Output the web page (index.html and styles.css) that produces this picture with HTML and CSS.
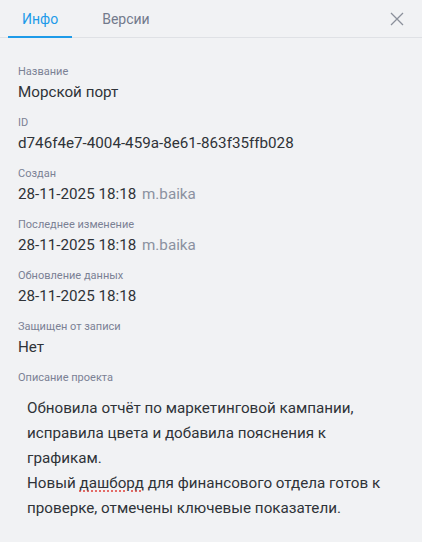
FILE: index.html
```html
<!DOCTYPE html>
<html lang="ru">
<head>
  <meta charset="UTF-8" />
  <title>Инфо</title>
  <link rel="stylesheet" href="styles.css">
</head>
<body>
  <header class="tabs-bar">
    <nav class="tabs">
      <a class="tab active" href="#">Инфо</a>
      <a class="tab" href="#">Версии</a>
    </nav>
    <button class="close" aria-label="Закрыть">
      <svg width="14" height="14" viewBox="0 0 14 14">
        <path d="M1 1 L13 13 M13 1 L1 13" stroke="#8b909b" stroke-width="1.3" fill="none"/>
      </svg>
    </button>
  </header>

  <main class="info">
    <div class="field">
      <div class="label">Название</div>
      <div class="value">Морской порт</div>
    </div>
    <div class="field">
      <div class="label">ID</div>
      <div class="value">d746f4e7-4004-459a-8e61-863f35ffb028</div>
    </div>
    <div class="field">
      <div class="label">Создан</div>
      <div class="value">28-11-2025 18:18 <span class="user">m.baika</span></div>
    </div>
    <div class="field">
      <div class="label">Последнее изменение</div>
      <div class="value">28-11-2025 18:18 <span class="user">m.baika</span></div>
    </div>
    <div class="field">
      <div class="label">Обновление данных</div>
      <div class="value">28-11-2025 18:18</div>
    </div>
    <div class="field">
      <div class="label">Защищен от записи</div>
      <div class="value">Нет</div>
    </div>
    <div class="field">
      <div class="label">Описание проекта</div>
      <div class="description">Обновила отчёт по маркетинговой кампании, исправила цвета и добавила пояснения к графикам.<br>Новый <span class="misspelled">дашборд</span> для финансового отдела готов к проверке, отмечены ключевые показатели.</div>
    </div>
  </main>
</body>
</html>
```

FILE: styles.css
```css
:root {
  --bg: #f1f2f4;
  --blue: #1e9be9;
  --text: #2f3338;
  --muted: #7b8194;
  --user: #8b91a0;
  --line: #dfe1e5;
}

* {
  margin: 0;
  padding: 0;
  box-sizing: border-box;
}

body {
  font-family: Roboto, 'Liberation Sans', sans-serif;
  background-color: var(--bg);
  color: var(--text);
}

.tabs-bar {
  display: flex;
  align-items: center;
  justify-content: space-between;
  height: 38px;
  padding: 0 18px 0 8px;
  border-bottom: 1px solid var(--line);
}

.tabs {
  display: flex;
  gap: 16px;
  height: 100%;
}

.tab {
  display: flex;
  align-items: center;
  padding: 1px 14px 0;
  font-size: 14px;
  color: #737a8c;
  text-decoration: none;
  border-bottom: 2px solid transparent;
  margin-bottom: -1px;
}

.tab.active {
  color: var(--blue);
  border-bottom-color: var(--blue);
}

.close {
  background: none;
  border: none;
  width: 14px;
  height: 14px;
  display: flex;
  cursor: pointer;
}

.info {
  padding: 26px 18px 20px;
}

.field {
  margin-bottom: 11px;
}

.label {
  font-size: 11px;
  line-height: 16px;
  color: var(--muted);
}

.value {
  font-size: 15.2px;
  line-height: 24px;
  color: var(--text);
}

.user {
  color: var(--user);
  margin-left: 2px;
}

.description {
  margin-top: 10px;
  padding: 0 9px;
  font-size: 15.2px;
  line-height: 25px;
  color: var(--text);
}

.misspelled {
  text-decoration: underline dotted #e0403c;
  text-underline-offset: 3px;
}
```
